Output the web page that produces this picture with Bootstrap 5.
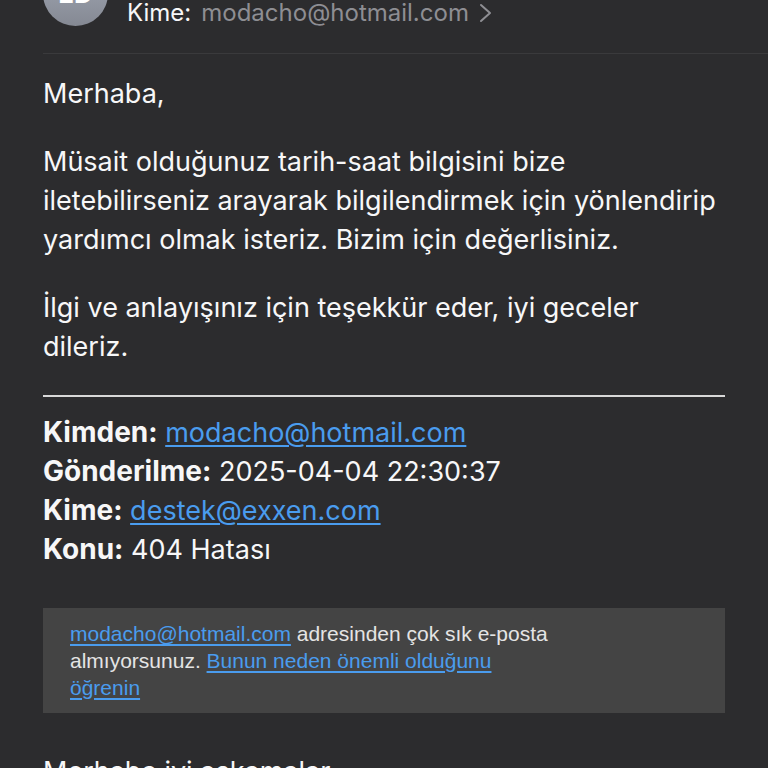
<!DOCTYPE html>
<html lang="tr">
<head>
<meta charset="utf-8">
<meta name="viewport" content="width=device-width, initial-scale=1">
<title>404 Hatası</title>
<link href="https://cdn.jsdelivr.net/npm/bootstrap@5.3.0/dist/css/bootstrap.min.css" rel="stylesheet">
<style>
body { background: #2c2c2e; color: #f7f7f8; font-family: Inter, "Liberation Sans", sans-serif; }
.mail-view { font-size: 27px; line-height: 39px; }
.mail-view a { color: #4a9cee; text-decoration-thickness: 2px; text-underline-offset: 3px; }
/* the message is scrolled, so the sender row starts above the window */
.mail-head { margin-top: -39px; padding-left: 43px; }
.avatar { width: 65px; height: 65px; font-size: 26px; background: linear-gradient(#a5abb9, #858993); }
.recipient { margin-left: 19px; padding-top: 32px; font-size: 24px; }
.recipient span { margin-right: 10px; }
.recipient svg { margin-left: 8px; }
.mail-view .recipient a { color: #8e8e93; }
.head-line { height: 1px; margin: 21px 0 0 43px; background: #3a3a3c; }
.mail-body { padding: 20px 43px 0; }
.mail-body p { margin-bottom: 29px; }
.mail-meta strong { font-size: 28px; }
.quote-line { border-top: 2px solid #d8d8d8; margin: 0 0 16px; opacity: 1; }
.notice { margin: 39px 0; padding: 12px 27px; background: #444; color: #e4e4e4; font: 21px/27px "Liberation Sans", Arial, sans-serif; }
.notice-text { max-width: 490px; }
</style>
<script src="https://cdn.jsdelivr.net/npm/bootstrap@5.3.0/dist/js/bootstrap.bundle.min.js"></script>
</head>
<body>
<main class="mail-view vh-100 overflow-hidden">
  <header>
    <div class="mail-head d-flex align-items-start">
      <div class="avatar rounded-circle d-flex align-items-center justify-content-center flex-shrink-0 fw-bold text-white">ED</div>
      <div class="recipient d-flex align-items-center">
        <span>Kime:</span>
        <a href="#" class="d-flex align-items-center text-decoration-none">modacho@hotmail.com
          <svg width="16" height="20" viewBox="0 0 16 20" fill="none" stroke="currentColor" stroke-width="2" stroke-linecap="round" stroke-linejoin="round" aria-hidden="true"><path d="M4 2l9 8-9 8"/></svg>
        </a>
      </div>
    </div>
    <div class="head-line"></div>
  </header>
  <article class="mail-body">
    <p>Merhaba,</p>
    <p>Müsait olduğunuz tarih-saat bilgisini bize iletebilirseniz arayarak bilgilendirmek için yönlendirip yardımcı olmak isteriz. Bizim için değerlisiniz.</p>
    <p>İlgi ve anlayışınız için teşekkür eder, iyi geceler dileriz.</p>
    <hr class="quote-line">
    <div class="mail-meta">
      <div><strong>Kimden:</strong> <a href="mailto:modacho@hotmail.com">modacho@hotmail.com</a></div>
      <div><strong>Gönderilme:</strong> 2025-04-04 22:30:37</div>
      <div><strong>Kime:</strong> <a href="mailto:destek@exxen.com">destek@exxen.com</a></div>
      <div><strong>Konu:</strong> 404 Hatası</div>
    </div>
    <aside class="notice">
      <div class="notice-text"><a href="mailto:modacho@hotmail.com">modacho@hotmail.com</a> adresinden çok sık e-posta almıyorsunuz. <a href="#">Bunun neden önemli olduğunu öğrenin</a></div>
    </aside>
    <p>Merhaba iyi aşkamalar</p>
  </article>
</main>
</body>
</html>
